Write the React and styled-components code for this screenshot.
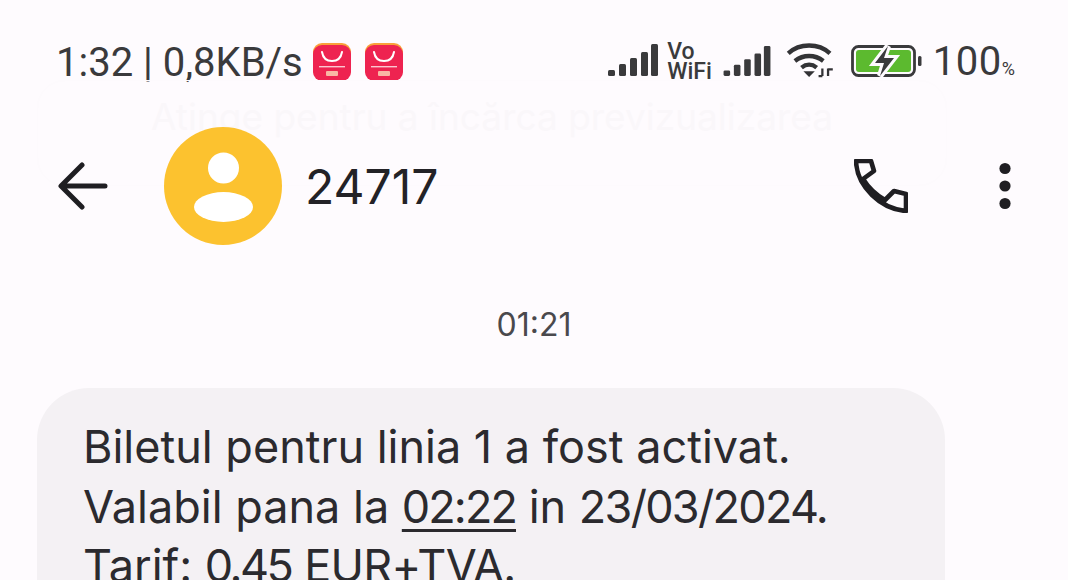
import React from 'react';
import styled, { createGlobalStyle } from 'styled-components';

const GlobalStyle = createGlobalStyle`
  html, body {
    margin: 0;
    padding: 0;
    background: #fefbfe;
  }
  #root {
    width: 1068px;
    height: 580px;
    overflow: hidden;
  }
`;

const Screen = styled.div`
  position: relative;
  width: 1068px;
  height: 580px;
  overflow: hidden;
  background: #fefbfe;
  font-family: Inter, "Liberation Sans", sans-serif;
  color: #2b2a2e;
`;

const StatusBar = styled.div`
  height: 48px;
  padding: 38px 53px 0 56px;
  display: flex;
  align-items: center;
  justify-content: space-between;
  font-family: Roboto, sans-serif;
  color: #3a3a3c;
`;

const StatusGroup = styled.div`
  display: flex;
  align-items: center;
`;

const NetText = styled.span`
  font-size: 40px;
  white-space: nowrap;
`;

const AppIcons = styled.div`
  display: flex;
  gap: 14px;
  margin-left: 10px;
`;

const BatteryText = styled.span`
  font-size: 40px;
  letter-spacing: 0.5px;
  margin-left: 11px;
  line-height: 1;
  & > small {
    font-size: 18px;
    letter-spacing: 0;
  }
`;

const VoWifi = styled.div`
  display: flex;
  flex-direction: column;
  align-items: flex-start;
  margin: 0 10px 0 9px;
  font-size: 23px;
  line-height: 20px;
  font-weight: 500;
`;

const IconSlot = styled.div`
  display: flex;
  margin-left: ${p => p.$left || 0}px;
  margin-bottom: ${p => p.$lift || 0}px;
`;

const GhostCard = styled.div`
  position: absolute;
  left: 37px;
  top: 80px;
  width: 910px;
  height: 106px;
  box-sizing: border-box;
  border: 1px solid #fdfafd;
  border-radius: 28px;
  padding-top: 13px;
  text-align: center;
  font-size: 37px;
  color: #faf7fa;
  white-space: nowrap;
`;

const Header = styled.div`
  position: relative;
  height: 118px;
  margin-top: 41px;
  padding: 0 55px 0 58px;
  display: flex;
  align-items: center;
`;

const BackButton = styled.div`
  width: 50px;
  height: 50px;
  display: flex;
  margin-right: 56px;
`;

const Avatar = styled.div`
  width: 118px;
  height: 118px;
  border-radius: 50%;
  background: #fcc22f;
  flex: none;
  margin-right: 23px;
`;

const Title = styled.div`
  flex: 1;
  font-size: 48px;
  color: #232226;
`;

const HeaderAction = styled.div`
  display: flex;
  margin-left: ${p => p.$gap}px;
`;

const Timestamp = styled.div`
  margin-top: 60px;
  text-align: center;
  font-size: 32px;
  line-height: 40px;
  color: #4a494d;
`;

const Bubble = styled.div`
  width: 908px;
  margin: 43px 0 0 37px;
  padding: 29px 47px 40px 46px;
  box-sizing: border-box;
  background: #f4f1f4;
  border-radius: 52px;
  font-size: 45px;
  line-height: 59.5px;
  color: #2b2a2e;
  white-space: nowrap;
`;

// the digits in the reference are narrower than Inter's
const Figures = styled.span`
  letter-spacing: ${p => p.$spacing}px;
`;

const TimeLink = styled(Figures)`
  text-decoration: underline;
  text-decoration-thickness: 3px;
  text-underline-offset: 6px;
`;

const ShopIcon = () => (
  <svg width="38" height="38" viewBox="0 0 38 38">
    <rect x="0" y="0" width="38" height="36" rx="9" fill="#f9a13a" />
    <rect x="0" y="2" width="38" height="36" rx="9" fill="#ee2350" />
    <path d="M9 9c1 6 5 9 10 9s9-3 10-9" fill="none" stroke="#fff" strokeWidth="2" strokeLinecap="round" />
    <rect x="6" y="23" width="26" height="1.4" fill="#fbc6d0" />
    <rect x="13" y="28" width="12" height="5" rx="1" fill="#f9b7a4" />
  </svg>
);

const Signal = ({ width, height }) => {
  const bars = [
    { x: 0, h: 6 },
    { x: 11, h: 12 },
    { x: 22, h: 18 },
    { x: 33, h: 24 },
    { x: 43, h: 32 },
  ];
  return (
    <svg width={width} height={height} viewBox="0 0 50 32">
      {bars.map(b => (
        <rect key={b.x} x={b.x} y={32 - b.h} width="7" height={b.h} rx="1.5" fill="#3a3a3c" />
      ))}
    </svg>
  );
};

const WifiIcon = () => (
  <svg width="50" height="36" viewBox="0 0 52 38" fill="none" stroke="#333336" strokeWidth="4.6">
    <path d="M2 12C14 1 34 1 46 12" />
    <path d="M9 20c9-7 21-7 30 0" />
    <path d="M16 27c5-4 11-4 16 0" />
    <path d="M18 31h12l-6 6z" fill="#333336" stroke="none" />
    <path d="M38 28v8M34 36h4M44 28v8M44 29h5" strokeWidth="2.4" />
  </svg>
);

const BatteryIcon = () => (
  <svg width="71" height="32" viewBox="0 0 71 32">
    <rect x="1.5" y="1.5" width="62" height="29" rx="6" fill="none" stroke="#3a3a3c" strokeWidth="2.8" />
    <rect x="5" y="5" width="55" height="22" rx="3" fill="#5cba2f" />
    <path d="M37 1 24 18h9l-4 13 14-18H33z" fill="#3a3a3c" stroke="#fefbfe" strokeWidth="6" paintOrder="stroke" />
    <rect x="67" y="11" width="3.5" height="10" rx="1.5" fill="#3a3a3c" />
  </svg>
);

const BackIcon = () => (
  <svg width="50" height="50" viewBox="0 0 50 50" fill="none" stroke="#1f1e22" strokeWidth="5" strokeLinecap="round" strokeLinejoin="round">
    <path d="M47 25H4M24 4 3 25l21 21" />
  </svg>
);

const PersonIcon = () => (
  <svg width="118" height="118" viewBox="0 0 118 118">
    <circle cx="59.5" cy="41" r="15.5" fill="#fff" />
    <ellipse cx="59.5" cy="80" rx="29.5" ry="15" fill="#fff" />
  </svg>
);

const PhoneIcon = () => (
  <svg width="54" height="54" viewBox="0 0 54 54" fill="none" stroke="#1f1e22" strokeWidth="4.6" strokeLinejoin="round">
    <path d="M2 2C3 28 27 50 52 52V35L40 32 31 41C22 36 14 28 9 20L20 12 17 2Z" />
  </svg>
);

const MoreIcon = () => (
  <svg width="16" height="50" viewBox="0 0 16 50" fill="#1f1e22">
    <circle cx="8" cy="7.5" r="5.6" />
    <circle cx="8" cy="25" r="5.6" />
    <circle cx="8" cy="42.5" r="5.6" />
  </svg>
);

const App = () => (
  <Screen>
    <GlobalStyle />
    <GhostCard>Atinge pentru a încărca previzualizarea</GhostCard>
    <StatusBar>
      <StatusGroup>
        <NetText>1:32 | 0,8KB/s</NetText>
        <AppIcons>
          <ShopIcon />
          <ShopIcon />
        </AppIcons>
      </StatusGroup>
      <StatusGroup>
        <IconSlot $lift={4}><Signal width={50} height={32} /></IconSlot>
        <VoWifi>
          <span>Vo</span>
          <span>WiFi</span>
        </VoWifi>
        <IconSlot $lift={3}><Signal width={50} height={30} /></IconSlot>
        <IconSlot $left={14} $lift={4}><WifiIcon /></IconSlot>
        <IconSlot $left={15} $lift={3}><BatteryIcon /></IconSlot>
        <BatteryText>100<small>%</small></BatteryText>
      </StatusGroup>
    </StatusBar>
    <Header>
      <BackButton><BackIcon /></BackButton>
      <Avatar><PersonIcon /></Avatar>
      <Title>24717</Title>
      <HeaderAction $gap={0}><PhoneIcon /></HeaderAction>
      <HeaderAction $gap={89}><MoreIcon /></HeaderAction>
    </Header>
    <Timestamp>01:21</Timestamp>
    <Bubble>
      Biletul pentru linia 1 a fost activat.
      <br />
      Valabil pana la <TimeLink $spacing={-1.9}>02:22</TimeLink> in <Figures $spacing={-1.7}>23/03/2024.</Figures>
      <br />
      Tarif: <Figures $spacing={-2.5}>0.45</Figures> <Figures $spacing={-0.7}>EUR+TVA.</Figures>
    </Bubble>
  </Screen>
);

export default App;
